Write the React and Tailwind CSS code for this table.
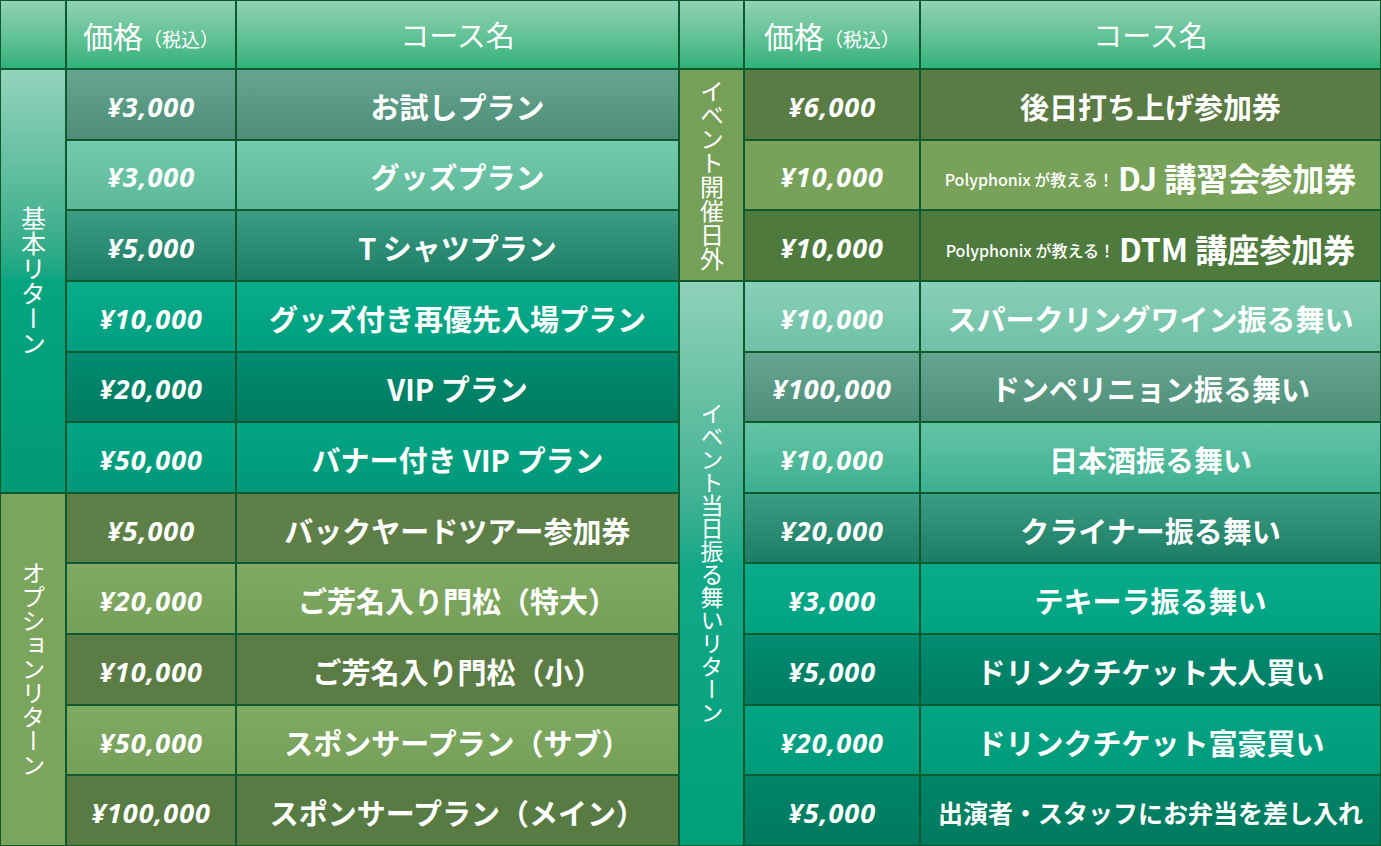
import React from "react";

const JP = { fontFamily: '"Noto Sans CJK JP", "Noto Sans", sans-serif' };
const PRICE = { fontFamily: '"Noto Sans", "Liberation Sans", sans-serif' };

const leftRows = [
  { p: "¥3,000", n: "お試しプラン", c: "bg-gradient-to-b from-[#66a690] to-[#4e8e79]" },
  { p: "¥3,000", n: "グッズプラン", c: "bg-gradient-to-b from-[#74caae] to-[#5cb898]" },
  { p: "¥5,000", n: "T シャツプラン", c: "bg-gradient-to-b from-[#3c9c84] to-[#1c7c64]" },
  { p: "¥10,000", n: "グッズ付き再優先入場プラン", c: "bg-gradient-to-b from-[#08ac8a] to-[#009f80]" },
  { p: "¥20,000", n: "VIP プラン", c: "bg-gradient-to-b from-[#008c70] to-[#007a60]" },
  { p: "¥50,000", n: "バナー付き VIP プラン", c: "bg-gradient-to-b from-[#03a585] to-[#009878]" },
  { p: "¥5,000", n: "バックヤードツアー参加券", c: "bg-[#5e7f48]" },
  { p: "¥20,000", n: "ご芳名入り門松（特大）", c: "bg-gradient-to-b from-[#80aa64] to-[#76a058]" },
  { p: "¥10,000", n: "ご芳名入り門松（小）", c: "bg-[#5b7d45]" },
  { p: "¥50,000", n: "スポンサープラン（サブ）", c: "bg-gradient-to-b from-[#80aa64] to-[#76a058]" },
  { p: "¥100,000", n: "スポンサープラン（メイン）", c: "bg-[#587b43]" },
];

const rightRows = [
  { p: "¥6,000", n: "後日打ち上げ参加券", c: "bg-[#5b7b45]" },
  { p: "¥10,000", n: "DJ 講習会参加券", pre: true, c: "bg-[#78a259]" },
  { p: "¥10,000", n: "DTM 講座参加券", pre: true, c: "bg-[#4f7a3d]" },
  { p: "¥10,000", n: "スパークリングワイン振る舞い", c: "bg-gradient-to-b from-[#88d0b8] to-[#70c0a6]" },
  { p: "¥100,000", n: "ドンペリニョン振る舞い", c: "bg-gradient-to-b from-[#66a690] to-[#4e8e79]" },
  { p: "¥10,000", n: "日本酒振る舞い", c: "bg-gradient-to-b from-[#64c4a6] to-[#3cb090]" },
  { p: "¥20,000", n: "クライナー振る舞い", c: "bg-gradient-to-b from-[#3c9c84] to-[#1c7c64]" },
  { p: "¥3,000", n: "テキーラ振る舞い", c: "bg-gradient-to-b from-[#08ac8a] to-[#00a282]" },
  { p: "¥5,000", n: "ドリンクチケット大人買い", c: "bg-gradient-to-b from-[#008c70] to-[#007c62]" },
  { p: "¥20,000", n: "ドリンクチケット富豪買い", c: "bg-gradient-to-b from-[#03a585] to-[#009a7a]" },
  { p: "¥5,000", n: "出演者・スタッフにお弁当を差し入れ", small: true, c: "bg-gradient-to-b from-[#008468] to-[#007a5e]" },
];

function Header() {
  return (
    <>
      <div className="bg-gradient-to-b from-[#8fd2b4] to-[#2db27a]" />
      <div className="bg-gradient-to-b from-[#8fd2b4] to-[#2db27a] flex items-center justify-center text-white" style={JP}>
        <span className="text-[30px] leading-none">価格</span>
        <span className="text-[19px] leading-none mt-2">（税込）</span>
      </div>
      <div className="bg-gradient-to-b from-[#8fd2b4] to-[#2db27a] flex items-center justify-center text-white text-[29px] leading-none" style={JP}>
        コース名
      </div>
    </>
  );
}

function Price({ p, c }) {
  return (
    <div className={`${c} flex items-center justify-center text-white text-[27px] font-bold italic leading-none tracking-[1px] pt-1`} style={PRICE}>
      {p}
    </div>
  );
}

function Name({ r }) {
  if (r.pre) {
    return (
      <div className={`${r.c} flex items-center justify-center text-white leading-none whitespace-nowrap pt-1`} style={JP}>
        <span className="text-[16px] font-medium mt-1">Polyphonix が教える！</span>
        <span className="text-[32px] font-bold ml-1">{r.n}</span>
      </div>
    );
  }
  return (
    <div
      className={`${r.c} flex items-center justify-center text-white font-bold leading-none whitespace-nowrap pt-1 ${r.small ? "text-[25px]" : "text-[29px]"}`}
      style={JP}
    >
      {r.n}
    </div>
  );
}

function Category({ text, c, size }) {
  return (
    <div className={`${c} flex items-center justify-center text-white`} style={JP}>
      <span className={`[writing-mode:vertical-rl] leading-none ${size}`}>{text}</span>
    </div>
  );
}

export default function App() {
  return (
    <div className="w-[1381px] h-[846px] bg-[#0c5a2e] p-[1px] overflow-hidden">
      <div className="grid h-full w-full gap-[2px] grid-cols-[64px_168px_441px_63px_174px_1fr] grid-rows-[67px_repeat(11,1fr)]">
        <div className="col-start-1 col-end-4 row-start-1 grid grid-cols-subgrid">
          <Header />
        </div>
        <div className="col-start-4 col-end-7 row-start-1 grid grid-cols-subgrid">
          <Header />
        </div>

        <div className="col-start-1 row-start-2 row-span-6 grid">
          <Category text="基本リターン" size="text-[25px]" c="bg-gradient-to-b from-[#92d4bc] via-[#06a580] to-[#009a74]" />
        </div>
        <div className="col-start-1 row-start-8 row-span-5 grid">
          <Category text="オプションリターン" size="text-[24px]" c="bg-[#7ba45d]" />
        </div>
        <div className="col-start-4 row-start-2 row-span-3 grid">
          <Category text="イベント開催日外" size="text-[24px]" c="bg-[#769f57]" />
        </div>
        <div className="col-start-4 row-start-5 row-span-8 grid">
          <Category text="イベント当日振る舞いリターン" size="text-[23px]" c="bg-gradient-to-b from-[#8ed2b8] via-[#12a888] to-[#00a078]" />
        </div>

        {leftRows.map((r, i) => (
          <div key={"l" + i} className="col-start-2 col-end-4 grid grid-cols-subgrid" style={{ gridRowStart: i + 2 }}>
            <Price p={r.p} c={r.c} />
            <Name r={r} />
          </div>
        ))}
        {rightRows.map((r, i) => (
          <div key={"r" + i} className="col-start-5 col-end-7 grid grid-cols-subgrid" style={{ gridRowStart: i + 2 }}>
            <Price p={r.p} c={r.c} />
            <Name r={r} />
          </div>
        ))}
      </div>
    </div>
  );
}
